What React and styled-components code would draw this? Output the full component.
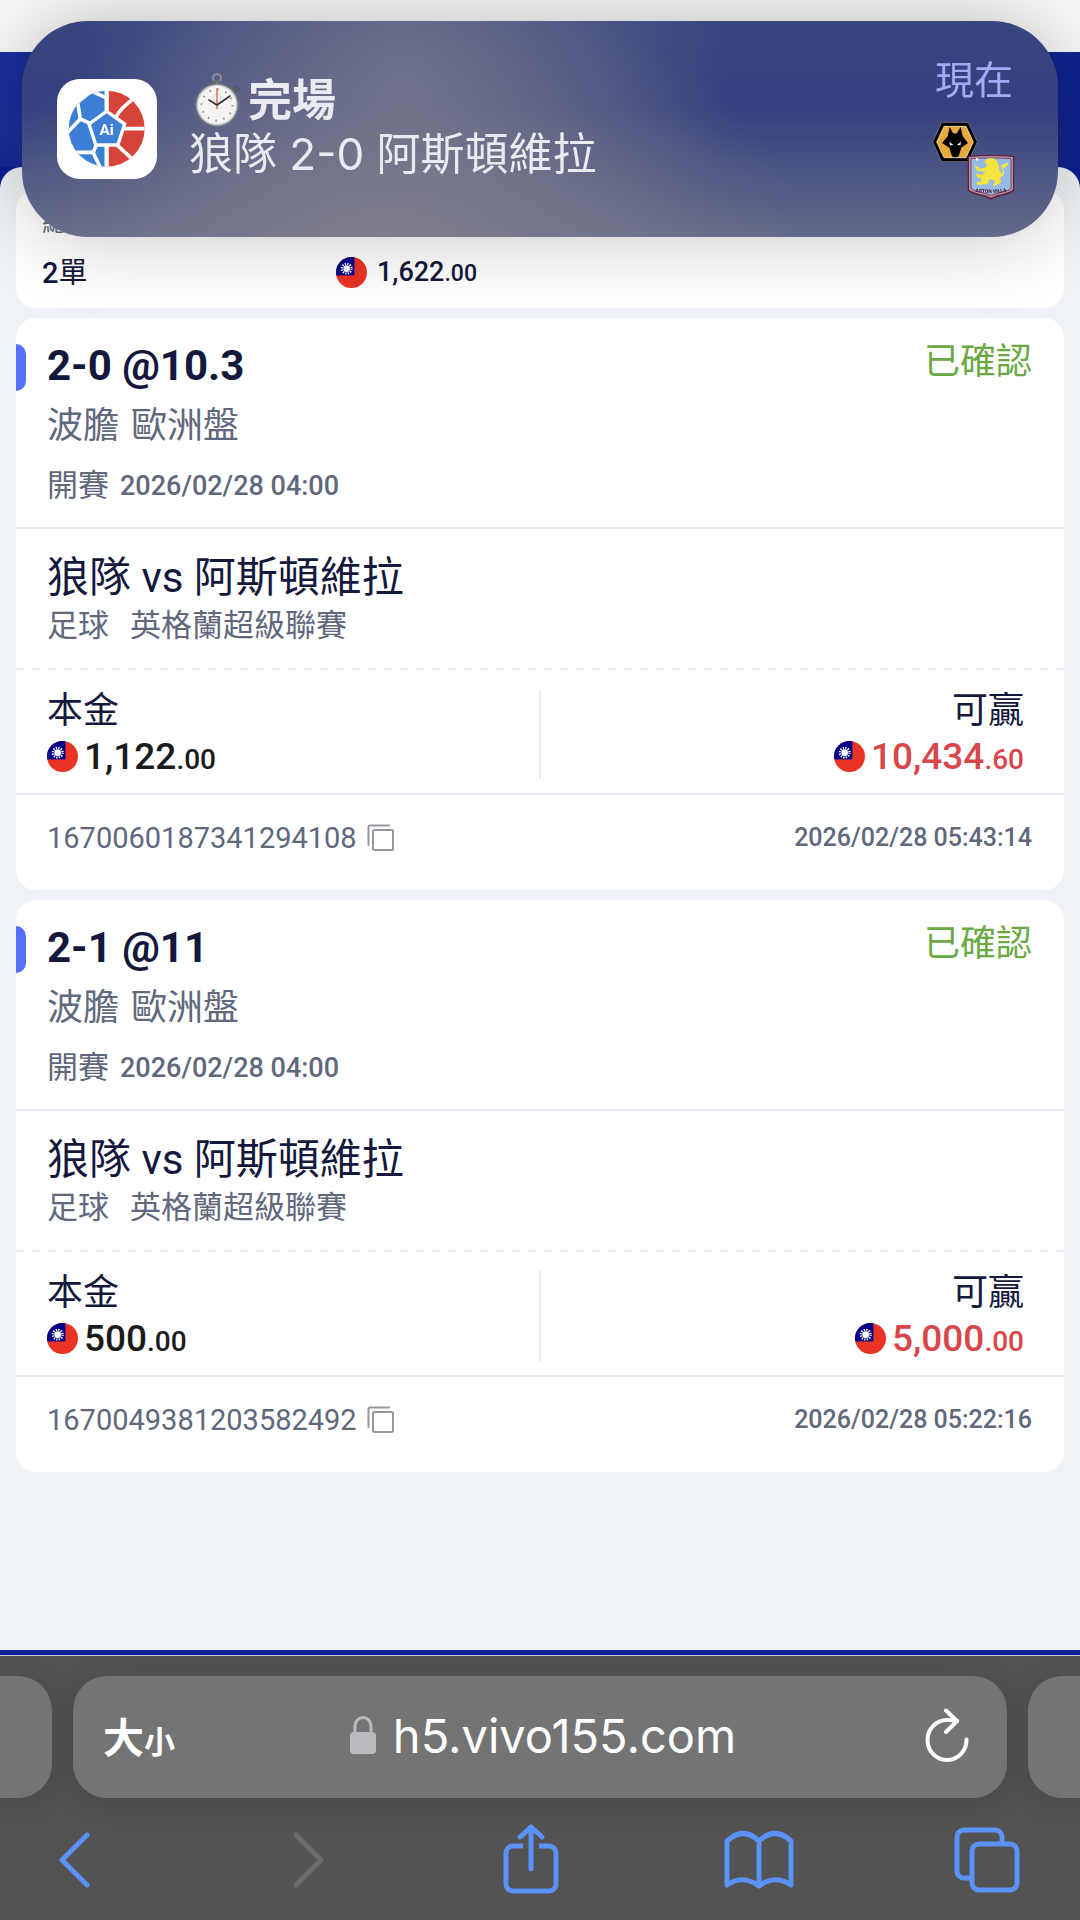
import React from 'react';
import styled, { createGlobalStyle } from 'styled-components';

const cjk = `"Noto Sans CJK TC", sans-serif`;

const bets = [
  {
    id: '1670060187341294108',
    pick: '2-0',
    odds: '@10.3',
    stake: ['1,122', '.00'],
    win: ['10,434', '.60'],
    time: '2026/02/28 05:43:14',
  },
  {
    id: '1670049381203582492',
    pick: '2-1',
    odds: '@11',
    stake: ['500', '.00'],
    win: ['5,000', '.00'],
    time: '2026/02/28 05:22:16',
  },
];

const Flag = () => (
  <FlagIcon viewBox="0 0 32 32" aria-hidden="true">
    <clipPath id="flag-round">
      <circle cx="16" cy="16" r="16" />
    </clipPath>
    <g clipPath="url(#flag-round)">
      <rect width="32" height="32" fill="#ea3323" />
      <rect width="19" height="19" fill="#00008b" />
      <circle cx="11" cy="12" r="5" fill="none" stroke="#fff" strokeWidth="2.4" strokeDasharray="1.3 1.32" />
      <circle cx="11" cy="12" r="3.4" fill="#fff" />
    </g>
  </FlagIcon>
);

const Money = ({ value, tone, small }) => (
  <Amount $tone={tone} $small={small}>
    <Flag />
    <span>
      {value[0]}
      <small>{value[1]}</small>
    </span>
  </Amount>
);

const CopyIcon = () => (
  <svg width="28" height="28" viewBox="0 0 28 28" fill="none" stroke="#94989d" strokeWidth="2" strokeLinecap="round">
    <rect x="6" y="6" width="20" height="20" rx="1.5" />
    <path d="M1.5 21V3a1.5 1.5 0 0 1 1.5-1.5h19" />
  </svg>
);

const AppLogo = () => (
  <svg width="100" height="100" viewBox="0 0 300 300" aria-hidden="true">
    <clipPath id="ball">
      <circle cx="149" cy="149" r="114" />
    </clipPath>
    <rect width="300" height="300" rx="68" fill="#fff" />
    <g clipPath="url(#ball)">
      <rect width="149" height="300" fill="#3d7fd4" />
      <rect x="149" width="151" height="300" fill="#d54339" />
      <g fill="none" stroke="#fff" strokeWidth="11">
        <path d="M149 20v90M149 190v90" strokeWidth="13" />
        <path d="M145 55L103 36L62 70L70 120L30 162M58 78L40 50M70 120L106 136" />
        <path d="M121 193L108 220H40M108 220L132 270" />
        <path d="M176 116Q190 86 234 56M196 149H270M178 196L232 246" />
      </g>
      <path d="M149 103L197 137L179 193H120L102 137Z" fill="#3d7fd4" stroke="#fff" strokeWidth="20" paintOrder="stroke" />
    </g>
    <text x="149" y="168" textAnchor="middle" fontFamily="Roboto" fontWeight="700" fontSize="46" fill="#fff">Ai</text>
  </svg>
);

const Stopwatch = () => (
  <svg width="48" height="56" viewBox="0 0 48 56" aria-hidden="true">
    <circle cx="24" cy="6" r="4" fill="none" stroke="#8b9096" strokeWidth="2" />
    <rect x="21" y="8" width="6" height="5" fill="#6a6e74" />
    <path d="M40 16l5-3 2 4-4 3z" fill="#555a62" />
    <circle cx="24" cy="33" r="22" fill="#70757c" />
    <circle cx="24" cy="33" r="20.5" fill="#c9ccd0" />
    <circle cx="24" cy="33" r="19" fill="#f4f4f2" />
    <circle cx="24" cy="33" r="15.5" fill="none" stroke="#8a8a8a" strokeWidth="2" strokeDasharray="1.4 6.715" />
    <circle cx="24" cy="26" r="4" fill="none" stroke="#b5b5b5" strokeWidth="1" strokeDasharray="1 1" />
    <path d="M24 37V16" stroke="#d9703f" strokeWidth="1.4" />
    <path d="M24 33L37 24M24 33L16 28" stroke="#333" strokeWidth="1.6" strokeLinecap="round" />
  </svg>
);

const WolvesCrest = () => (
  <svg width="46" height="42" viewBox="0 0 138 122" aria-hidden="true">
    <path d="M2 61L29 2H109L136 61L109 120H29Z" fill="#000" stroke="#8c8f9b" strokeWidth="2" />
    <path d="M14 61L36 14H102L124 61L102 108H36Z" fill="#e9a93a" stroke="#fff" strokeWidth="2" />
    <path d="M53 16L63 34Q69 37 75 34L86 16L92 44L108 64L88 78L80 104Q70 110 60 104L52 78L30 64L47 44Z" fill="#000" />
    <path d="M52 60l12 10-10 1zM87 60L75 70l10 1z" fill="#fff" />
  </svg>
);

const VillaCrest = () => (
  <svg width="48" height="46" viewBox="0 0 144 138" aria-hidden="true">
    <path d="M2 6Q72-2 142 6V108Q140 118 90 129L72 137L54 129Q4 118 2 108Z" fill="#5e2440" />
    <path d="M6 9Q72 3 138 9V106Q136 114 90 124L72 131L54 124Q8 114 6 106Z" fill="#b98a9e" />
    <path d="M12 14Q72 9 132 14V102Q128 110 90 118L72 124L54 118Q16 110 12 102Z" fill="#95bbe2" stroke="#5e2440" strokeWidth="2" />
    <path
      d="M52 24Q58 10 76 13Q92 16 94 34Q96 48 102 58Q112 60 104 44Q98 32 112 30L124 25Q120 44 106 42Q118 60 104 68Q98 70 97 72Q107 80 98 88L84 97Q78 98 79 90L86 84L74 76L64 78L66 88L46 92Q28 96 28 84L42 83L44 74L30 70L26 58L44 62L56 54L30 50L22 34L34 38L38 44L56 40L60 32Z"
      fill="#f5e43d"
    />
    <circle cx="30" cy="16" r="4" fill="#fff" />
    <path id="villa-arc" d="M18 112Q72 122 126 112" fill="none" />
    <text fontFamily="Roboto" fontWeight="900" fontSize="15" fill="#4b1d3a" textAnchor="middle">
      <textPath href="#villa-arc" startOffset="50%">ASTON VILLA</textPath>
    </text>
  </svg>
);

const LockIcon = () => (
  <svg width="26" height="38" viewBox="0 0 26 38" aria-hidden="true">
    <path d="M5 18V10a8 8.5 0 0 1 16 0v8" fill="none" stroke="#bbbac1" strokeWidth="3" />
    <rect y="16" width="26" height="22" rx="4" fill="#bbbac1" />
  </svg>
);

const ReloadIcon = () => (
  <svg width="44" height="54" viewBox="0 0 44 54" fill="none" stroke="#fff" strokeWidth="4" strokeLinecap="round" strokeLinejoin="round">
    <path d="M41.500 31.500A19.500 20 0 1 1 22 12Q27 12 32 13" />
    <path d="M21 2.500L32 13L21 24" />
  </svg>
);

const App = () => {
  return (
    <Page>
      <GlobalStyle />
      <StatusStrip />
      <HeroBar />
      <Sheet>
        <Summary>
          <SummaryLabel>總計</SummaryLabel>
          <SummaryLabel />
          <SummaryValue>
            <span>2</span>單
          </SummaryValue>
          <Money value={['1,622', '.00']} small />
        </Summary>
        {bets.map((bet) => (
          <Card key={bet.id}>
            <CardHead>
              <TitleRow>
                <Accent />
                <Title>
                  {bet.pick} {bet.odds}
                </Title>
                <Status>已確認</Status>
              </TitleRow>
              <Market>
                <span>波膽</span>
                <span>歐洲盤</span>
              </Market>
              <Kickoff>
                開賽
                <time>2026/02/28 04:00</time>
              </Kickoff>
            </CardHead>
            <MatchInfo>
              <Teams>狼隊 vs 阿斯頓維拉</Teams>
              <League>
                <span>足球</span>
                <span>英格蘭超級聯賽</span>
              </League>
            </MatchInfo>
            <DashedLine />
            <Stakes>
              <StakeCell>
                <StakeLabel>本金</StakeLabel>
                <Money value={bet.stake} tone="#1b1b1b" />
              </StakeCell>
              <StakeSplit />
              <StakeCell $end>
                <StakeLabel>可贏</StakeLabel>
                <Money value={bet.win} tone="#d9464a" />
              </StakeCell>
            </Stakes>
            <CardFoot>
              <BetId>
                {bet.id}
                <CopyButton aria-label="複製">
                  <CopyIcon />
                </CopyButton>
              </BetId>
              <BetTime>{bet.time}</BetTime>
            </CardFoot>
          </Card>
        ))}
      </Sheet>

      <Browser>
        <TabStrip>
          <SideTab $left />
          <AddressBar>
            <TextSize aria-label="大小">
              大<span>小</span>
            </TextSize>
            <Address>
              <LockIcon />
              h5.vivo155.com
            </Address>
            <Reload aria-label="重新載入">
              <ReloadIcon />
            </Reload>
          </AddressBar>
          <SideTab />
        </TabStrip>
        <Toolbar>
          <ToolButton aria-label="上一頁">
            <svg width="32" height="56" viewBox="0 0 32 56">
              <path d="M29 3L4 28L29 53" />
            </svg>
          </ToolButton>
          <ToolButton aria-label="下一頁" disabled>
            <svg width="46" height="56" viewBox="0 0 46 56">
              <path d="M17 3L42 28L17 53" />
            </svg>
          </ToolButton>
          <ToolButton aria-label="分享">
            <svg width="56" height="72" viewBox="0 0 56 72">
              <path d="M20 22H10a7 7 0 0 0-7 7v31a7 7 0 0 0 7 7h36a7 7 0 0 0 7-7V29a7 7 0 0 0-7-7h-10" strokeLinecap="butt" />
              <path d="M28 45V3M17 13L28 3L39 13" />
            </svg>
          </ToolButton>
          <ToolButton aria-label="書籤">
            <svg width="70" height="60" viewBox="0 0 70 60">
              <path d="M3 55V11Q19-4 35 11Q51-4 67 11V55Q51 44 35 56Q19 44 3 55ZM35 11V56" />
            </svg>
          </ToolButton>
          <ToolButton aria-label="分頁">
            <svg width="66" height="66" viewBox="0 0 66 66">
              <rect x="18" y="17" width="45" height="46" rx="7" />
              <path d="M48 17V10a7 7 0 0 0-7-7H10a7 7 0 0 0-7 7v34a7 7 0 0 0 7 7h8" strokeLinecap="butt" />
            </svg>
          </ToolButton>
        </Toolbar>
      </Browser>

      <Banner role="status">
        <AppLogo />
        <BannerText>
          <BannerTitle>
            <Stopwatch />
            完場
          </BannerTitle>
          <BannerBody>狼隊 2-0 阿斯頓維拉</BannerBody>
        </BannerText>
        <BannerSide>
          <BannerTime>現在</BannerTime>
          <Crests>
            <WolvesCrest />
            <VillaCrest />
          </Crests>
        </BannerSide>
      </Banner>
    </Page>
  );
};

const GlobalStyle = createGlobalStyle`
  * {
    box-sizing: border-box;
  }

  body {
    margin: 0;
    font-family: Roboto, ${cjk};
    color: #14183c;
  }

  button {
    display: inline-flex;
    align-items: center;
    padding: 0;
    border: 0;
    background: none;
    font: inherit;
    color: inherit;
  }

  svg {
    display: block;
    flex-shrink: 0;
  }
`;

const Page = styled.div`
  display: flex;
  flex-direction: column;
  min-height: 100vh;
  background: #0b2095;
`;

const StatusStrip = styled.div`
  height: 52px;
  background: #f8f8f8;
`;

const HeroBar = styled.div`
  height: 115px;
  background: radial-gradient(circle at 0 0, #1a2f9b 80px, #10238f 160px);
`;

const Sheet = styled.main`
  flex: 1;
  display: flex;
  flex-direction: column;
  gap: 10px;
  margin-bottom: 5px;
  padding: 23px 16px 24px;
  border-radius: 22px 22px 0 0;
  background: #eff2f6;
`;

const Summary = styled.section`
  display: grid;
  grid-template-columns: 294px 1fr;
  row-gap: 14px;
  padding: 15px 26px 17px;
  border-radius: 20px;
  background: #fff;
`;

const SummaryLabel = styled.div`
  min-height: 34px;
  font-size: 26px;
  line-height: 34px;
  color: #5f687c;
`;

const SummaryValue = styled.div`
  display: flex;
  font-size: 29px;
  line-height: 40px;
  height: 38px;

  span {
    font-weight: 500;
  }
`;

const FlagIcon = styled.svg`
  width: 31px;
  height: 31px;
`;

const Amount = styled.div`
  display: flex;
  align-items: center;
  gap: ${(p) => (p.$small ? 10 : 6)}px;
  height: ${(p) => (p.$small ? 38 : 46)}px;
  font-size: ${(p) => (p.$small ? 27 : 37)}px;
  font-weight: 500;
  color: ${(p) => p.$tone || 'inherit'};

  small {
    font-size: ${(p) => (p.$small ? 23 : 28)}px;
  }
`;

const Card = styled.article`
  border-radius: 20px;
  background: #fff;
`;

const CardHead = styled.header`
  display: grid;
  row-gap: 12px;
  padding: 22px 32px 15px 31px;
  border-bottom: 2px solid #e8ebf4;
`;

const TitleRow = styled.div`
  display: flex;
  align-items: flex-start;
`;

const Accent = styled.span`
  width: 10px;
  height: 47px;
  margin: 4px 21px 0 -31px;
  border-radius: 0 10px 10px 0;
  background: #536ffb;
`;

const Title = styled.h2`
  flex: 1;
  margin: 0;
  font-size: 42px;
  font-weight: 700;
  line-height: 52px;
`;

const Status = styled.span`
  font-size: 36px;
  line-height: 44px;
  color: #6aa944;
`;

const Market = styled.div`
  display: flex;
  gap: 12px;
  font-size: 36px;
  line-height: 44px;
  color: #5f687c;
`;

const Kickoff = styled.div`
  display: flex;
  gap: 11px;
  font-size: 31px;
  line-height: 52px;
  color: #5f687c;

  time {
    font-size: 27px;
    font-weight: 500;
  }
`;

const MatchInfo = styled.div`
  padding: 22px 32px 21px 31px;
`;

const Teams = styled.div`
  font-size: 42px;
  line-height: 54px;
`;

const League = styled.div`
  display: flex;
  gap: 21px;
  font-size: 31px;
  line-height: 42px;
  color: #5f687c;
`;

const DashedLine = styled.div`
  height: 2px;
  background: repeating-linear-gradient(90deg, #e8ebf4 0 8px, transparent 8px 16px);
`;

const Stakes = styled.div`
  display: grid;
  grid-template-columns: 1fr 2px 1fr;
  padding: 19px 0 14px;
  border-bottom: 2px solid #e8ebf4;
`;

const StakeCell = styled.div`
  display: flex;
  flex-direction: column;
  align-items: ${(p) => (p.$end ? 'flex-end' : 'flex-start')};
  padding: 0 40px 0 31px;
`;

const StakeSplit = styled.div`
  background: #e8ebf4;
`;

const StakeLabel = styled.div`
  font-size: 36px;
  line-height: 44px;
`;

const CardFoot = styled.footer`
  display: flex;
  justify-content: space-between;
  padding: 20px 32px 29px 31px;
  line-height: 46px;
  color: #5f687c;
`;

const BetId = styled.div`
  display: flex;
  align-items: center;
  gap: 10px;
  height: 46px;
  font-size: 29px;
`;

const CopyButton = styled.button``;

const BetTime = styled.time`
  font-size: 25px;
  font-weight: 500;
`;

const Browser = styled.footer`
  padding-top: 20px;
  border-top: 1px solid #c3cad2;
  background: #535353;
  overflow: hidden;
`;

const TabStrip = styled.div`
  display: flex;
  gap: 21px;
  height: 122px;
`;

const SideTab = styled.div`
  width: 52px;
  border-radius: ${(p) => (p.$left ? '0 34px 34px 0' : '34px 0 0 34px')};
  background: #747474;
  box-shadow: 0 4px 30px rgba(0, 0, 0, 0.15);
`;

const AddressBar = styled.div`
  flex: 1;
  display: grid;
  grid-template-columns: 1fr auto 1fr;
  align-items: center;
  padding: 0 38px 4px 30px;
  border-radius: 34px;
  background: #747474;
  box-shadow: 0 4px 30px rgba(0, 0, 0, 0.15);
  color: #fff;
`;

const TextSize = styled.button`
  align-items: baseline;
  font-size: 41px;
  font-weight: 700;

  span {
    font-size: 31px;
  }
`;

const Address = styled.div`
  display: flex;
  align-items: center;
  gap: 17px;
  padding-left: 14px;
  font-family: Inter, sans-serif;
  font-size: 47px;
`;

const Reload = styled.button`
  justify-self: end;
`;

const Toolbar = styled.nav`
  display: flex;
  justify-content: space-between;
  padding: 22px 58px 20px 39px;
`;

const ToolButton = styled.button`
  justify-content: center;
  width: 70px;
  height: 80px;

  svg {
    fill: none;
    stroke: ${(p) => (p.disabled ? '#6b6b6b' : '#5b92f8')};
    stroke-width: 5;
    stroke-linecap: round;
    stroke-linejoin: round;
  }
`;

const Banner = styled.div`
  position: fixed;
  top: 21px;
  left: 22px;
  right: 22px;
  display: flex;
  align-items: center;
  gap: 32px;
  height: 216px;
  padding: 0 43px 0 35px;
  border-radius: 66px;
  background:
    radial-gradient(ellipse 420px 280px at 35% 110%, rgba(130, 128, 138, 0.9), rgba(130, 128, 138, 0.45) 45%, rgba(130, 128, 138, 0)),
    radial-gradient(ellipse 320px 340px at 37% 30%, rgba(120, 122, 142, 0.75), rgba(120, 122, 142, 0.4) 50%, rgba(120, 122, 142, 0)),
    linear-gradient(180deg, #39457f, #35407f 40%, #646a89);
  box-shadow: 0 0 80px rgba(0, 0, 0, 0.24);
  color: #eaeaf1;
`;

const BannerText = styled.div`
  flex: 1;
  padding-bottom: 6px;
  font-family: Inter, ${cjk};
  font-size: 44px;
  line-height: 52px;
`;

const BannerTitle = styled.div`
  display: flex;
  align-items: center;
  gap: 7px;
  padding-left: 4px;
  font-weight: 700;
`;

const BannerBody = styled.div``;

const BannerSide = styled.div`
  display: flex;
  flex-direction: column;
  align-items: flex-end;
  gap: 18px;
`;

const BannerTime = styled.span`
  padding-right: 2px;
  font-size: 39px;
  line-height: 44px;
  color: #9fadf7;
`;

const Crests = styled.div`
  position: relative;
  width: 83px;
  height: 79px;

  svg + svg {
    position: absolute;
    right: 0;
    bottom: 0;
  }
`;

export default App;
